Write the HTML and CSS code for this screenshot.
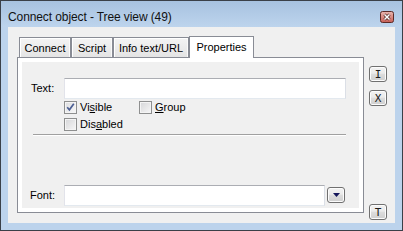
FILE: index.html
```html
<!DOCTYPE html>
<html>
<head>
<meta charset="utf-8">
<link rel="stylesheet" href="styles.css">
</head>
<body>
<div class="window">
  <div class="titlebar">
    <span class="title">Connect object - Tree view (49)</span>
    <span class="close">
      <svg width="14" height="12" viewBox="0 0 14 12">
        <defs>
          <linearGradient id="cg" x1="0" y1="0" x2="0" y2="1">
            <stop offset="0" stop-color="#e9b7b1"/>
            <stop offset="1" stop-color="#c65d55"/>
          </linearGradient>
        </defs>
        <rect x="0.5" y="0.5" width="13" height="11" rx="2" fill="url(#cg)" stroke="#5b2a27"/>
        <path d="M4.5 3.5 L9.5 8.5 M9.5 3.5 L4.5 8.5" stroke="#4a2220" stroke-width="3"/>
        <path d="M4.5 3.5 L9.5 8.5 M9.5 3.5 L4.5 8.5" stroke="#ffffff" stroke-width="1.5"/>
      </svg>
    </span>
  </div>
  <div class="client">
    <div class="tabctl">
      <div class="tabs">
        <div class="tab tab-connect">Connect</div>
        <div class="tab tab-script">Script</div>
        <div class="tab tab-info">Info text/URL</div>
        <div class="tab tab-props active">Properties</div>
      </div>
      <div class="panel">
        <div class="page">
          <div class="row row-text">
            <span class="label">Text:</span>
            <span class="input input-text"></span>
          </div>
          <div class="checkrow checkrow-1">
            <span class="check check-visible">
              <span class="box checked">
                <svg width="11" height="11" viewBox="0 0 11 11"><path d="M2.2 5.2 L4.4 7.8 L8.8 1.8" fill="none" stroke="#4c5f93" stroke-width="1.7"/></svg>
              </span>
              <span class="ctext">Vi<u>s</u>ible</span>
            </span>
            <span class="check">
              <span class="box"></span>
              <span class="ctext"><u>G</u>roup</span>
            </span>
          </div>
          <div class="checkrow checkrow-2">
            <span class="check">
              <span class="box"></span>
              <span class="ctext">Dis<u>a</u>bled</span>
            </span>
          </div>
          <div class="separator"></div>
          <div class="row row-font">
            <span class="label label-font">Font:</span>
            <span class="input input-font"></span>
            <span class="btn dropbtn">
              <svg width="7" height="4" viewBox="0 0 7 4"><path d="M0 0 H7 L3.5 4 Z" fill="#14165a"/></svg>
            </span>
          </div>
        </div>
      </div>
    </div>
    <div class="side">
      <span class="btn sidebtn btn-i">I</span>
      <span class="btn sidebtn btn-x">X</span>
      <span class="btn sidebtn btn-t">T</span>
    </div>
  </div>
</div>
</body>
</html>
```
FILE: styles.css
```css
html, body {
  margin: 0;
  padding: 0;
  width: 403px;
  height: 231px;
  overflow: hidden;
}

.window {
  width: 403px;
  height: 231px;
  box-sizing: border-box;
  border: 1px solid #3a4048;
  background: #bcd3ec;
  display: flex;
  flex-direction: column;
  font-family: "Liberation Sans", Arial, sans-serif;
  font-size: 11px;
  color: #000;
}

.titlebar {
  height: 26px;
  flex: none;
  display: flex;
  align-items: flex-start;
  padding: 0 8px 0 7px;
  background: linear-gradient(#a7c2e0, #bdd4ed);
}

.title {
  margin-top: 9px;
  font-size: 12px;
  line-height: 14px;
  letter-spacing: -0.1px;
  color: #111;
  white-space: nowrap;
}

.close {
  margin-left: auto;
  margin-top: 10px;
  width: 14px;
  height: 12px;
  display: flex;
}

.client {
  flex: 1;
  margin: 0 7px 7px 7px;
  background: #f0f0f0;
  display: flex;
  padding: 8px 0 0 9px;
  box-sizing: border-box;
}

.tabctl {
  width: 347px;
  display: flex;
  flex-direction: column;
}

.tabs {
  height: 22px;
  display: flex;
  align-items: flex-end;
  padding-left: 2px;
  position: relative;
  z-index: 1;
}

.tab {
  height: 20px;
  box-sizing: border-box;
  border: 1px solid #898c95;
  border-bottom: none;
  background: linear-gradient(#f4f4f4, #e4e4e4);
  box-shadow: inset 1px 1px 0 #ffffff, inset -1px 0 0 #fafafa;
  display: flex;
  align-items: center;
  justify-content: center;
  white-space: nowrap;
  line-height: 13px;
  padding-top: 1px;
}

.tab-connect { width: 52px; }
.tab-script { width: 42px; }
.tab-info { width: 76px; }

.tab.active {
  width: 65px;
  height: 22px;
  margin-bottom: -1px;
  background: #ffffff;
  box-shadow: none;
  padding-top: 0;
  padding-bottom: 1px;
}

.panel {
  height: 156px;
  box-sizing: border-box;
  border: 1px solid #898c95;
  background: #ffffff;
  padding: 4px;
}

.page {
  height: 100%;
  background: #f0f0f0;
  display: flex;
  flex-direction: column;
}

.row {
  display: flex;
  align-items: center;
  height: 21px;
}

.row-text {
  margin-top: 16px;
}

.label {
  width: 33px;
  padding-left: 9px;
  line-height: 13px;
}

.label-font {
  width: 34px;
  padding-left: 8px;
}

.input {
  height: 21px;
  box-sizing: border-box;
  background: #ffffff;
  border: 1px solid;
  border-color: #abadb3 #dbdfe6 #e3e9ef #e2e3ea;
}

.input-text { width: 282px; }
.input-font { width: 261px; }

.checkrow {
  display: flex;
  height: 13px;
  padding-left: 42px;
}

.checkrow-1 { margin-top: 2px; }
.checkrow-2 { margin-top: 4px; }

.check {
  display: flex;
  align-items: center;
  height: 13px;
}

.check-visible {
  width: 75px;
}

.box {
  width: 13px;
  height: 13px;
  box-sizing: border-box;
  border: 1px solid #8e8f8f;
  background: linear-gradient(135deg, #d5d6d8, #f7f7f7);
  box-shadow: inset 0 0 0 1px #f4f4f4;
  display: flex;
  flex: none;
}

.box.checked {
  background: linear-gradient(135deg, #dcdde0, #f8f8f8);
}

.ctext {
  margin-left: 3px;
  line-height: 13px;
  white-space: nowrap;
}

.ctext u {
  text-decoration-thickness: 1px;
  text-underline-offset: 1px;
}

.separator {
  margin-top: 3px;
  margin-left: 11px;
  width: 313px;
  height: 1px;
  background: #a0a0a0;
  border-bottom: 1px solid #ffffff;
}

.row-font {
  margin-top: auto;
  margin-bottom: 2px;
  align-items: flex-start;
}

.row-font .label {
  align-self: center;
}

.btn {
  box-sizing: border-box;
  border: 1px solid #707070;
  border-radius: 3px;
  background: linear-gradient(#f2f2f2 0%, #ebebeb 45%, #dddddd 50%, #cfcfcf 100%);
  box-shadow: inset 0 0 0 1px #fcfcfc;
  display: flex;
  align-items: center;
  justify-content: center;
}

.dropbtn {
  width: 18px;
  height: 16px;
  margin-left: 2px;
  margin-top: 2px;
}

.side {
  display: flex;
  flex-direction: column;
  margin-left: 5px;
  padding-top: 31px;
}

.sidebtn {
  width: 18px;
  height: 16px;
  font-family: "DejaVu Sans Mono", "Liberation Mono", monospace;
  font-size: 11px;
  font-weight: normal;
  line-height: 13px;
  color: #1a1a1a;
}

.btn-x {
  margin-top: 8px;
}

.btn-t {
  margin-top: 98px;
}
```
